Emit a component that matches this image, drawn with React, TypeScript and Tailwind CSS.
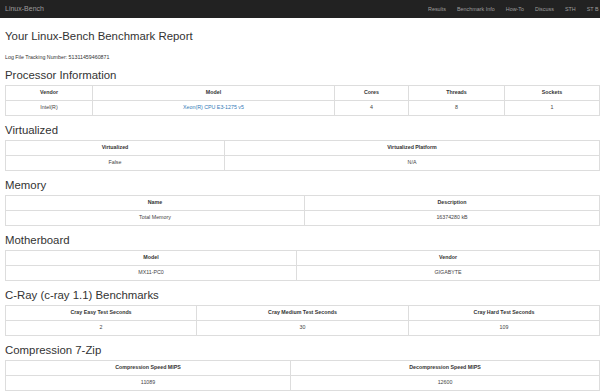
import React from "react";

type Section = {
  title: string;
  cols: string;
  head: string[];
  row: React.ReactNode[];
};

const sections: Section[] = [
  {
    title: "Processor Information",
    cols: "grid-cols-[87px_242px_74px_96px_1fr]",
    head: ["Vendor", "Model", "Cores", "Threads", "Sockets"],
    row: [
      "Intel(R)",
      <span className="text-[#337ab7]">Xeon(R) CPU E3-1275 v5</span>,
      "4",
      "8",
      "1",
    ],
  },
  {
    title: "Virtualized",
    cols: "grid-cols-[219px_1fr]",
    head: ["Virtualized", "Virtualized Platform"],
    row: ["False", "N/A"],
  },
  {
    title: "Memory",
    cols: "grid-cols-[299px_1fr]",
    head: ["Name", "Description"],
    row: ["Total Memory", "16374280 kB"],
  },
  {
    title: "Motherboard",
    cols: "grid-cols-[291px_1fr]",
    head: ["Model", "Vendor"],
    row: ["MX11-PC0", "GIGABYTE"],
  },
  {
    title: "C-Ray (c-ray 1.1) Benchmarks",
    cols: "grid-cols-[191px_212px_1fr]",
    head: ["Cray Easy Test Seconds", "Cray Medium Test Seconds", "Cray Hard Test Seconds"],
    row: ["2", "30", "109"],
  },
  {
    title: "Compression 7-Zip",
    cols: "grid-cols-[285px_1fr]",
    head: ["Compression Speed MIPS", "Decompression Speed MIPS"],
    row: ["11089", "12600"],
  },
];

const navItems = ["Results", "Benchmark Info", "How-To", "Discuss", "STH", "ST B"];

const DataTable = ({ s }: { s: Section }) => (
  <div className={`grid ${s.cols} border-t border-r border-[#ddd]`}>
    {s.head.map((h, i) => (
      <div
        key={`h${i}`}
        className="h-[15px] border-l border-b border-[#ddd] flex items-center justify-center text-[5.3px] font-bold text-[#333]"
      >
        {h}
      </div>
    ))}
    {s.row.map((c, i) => (
      <div
        key={`r${i}`}
        className="h-[15px] border-l border-b border-[#ddd] flex items-center justify-center text-[5.3px] text-[#444]"
      >
        {c}
      </div>
    ))}
  </div>
);

export default function App() {
  return (
    <div className="w-[600px] h-[392px] overflow-hidden bg-white font-['Liberation_Sans',Arial,sans-serif] text-[#333]">
      <nav className="h-[18px] bg-[#222] flex items-center overflow-hidden whitespace-nowrap">
        <div className="w-[428px] shrink-0 pl-[5px] text-[7px] text-[#9d9d9d]">Linux-Bench</div>
        <div className="flex gap-[11px] text-[5.4px] text-[#9d9d9d]">
          {navItems.map((n) => (
            <span key={n}>{n}</span>
          ))}
        </div>
      </nav>

      <div className="pl-[5px]">
        <h1 className="mt-[12px] text-[11.4px] leading-[12px]">Your Linux-Bench Benchmark Report</h1>
        <p className="mt-[12px] text-[5.3px] leading-[7px]">Log File Tracking Number: 51311459460871</p>

        {sections.map((s) => (
          <section key={s.title} className="mt-[8px]">
            <h3 className="text-[11.4px] leading-[12px] mb-[4px]">{s.title}</h3>
            <DataTable s={s} />
          </section>
        ))}
      </div>
    </div>
  );
}
